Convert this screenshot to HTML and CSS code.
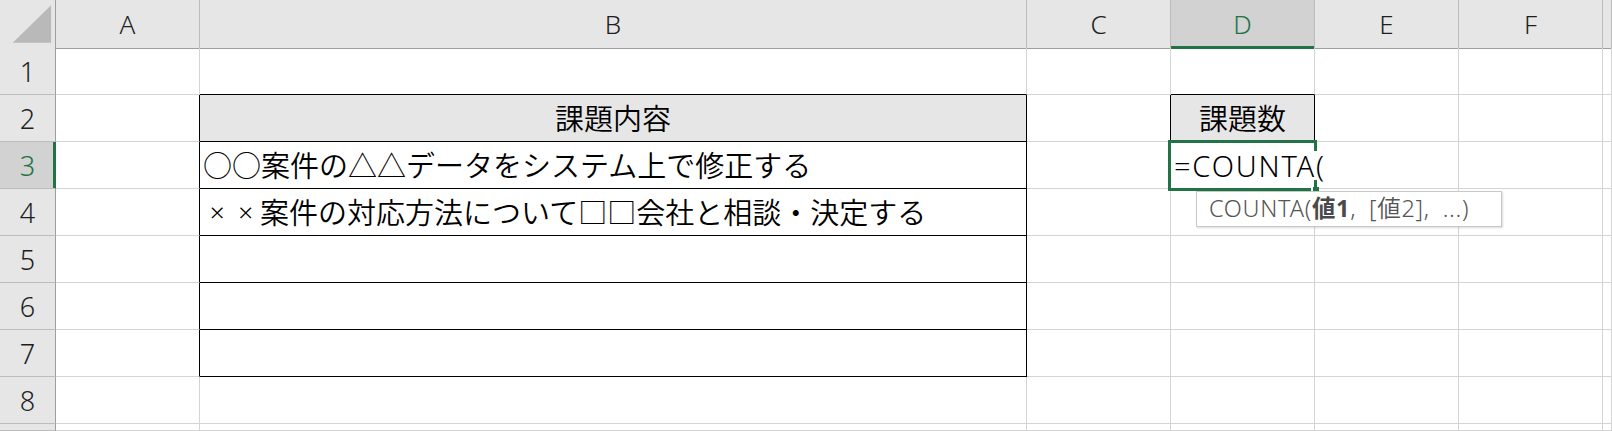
FILE: index.html
```html
<!DOCTYPE html>
<html lang="ja">
<head>
    <meta charset="UTF-8">
    <title>課題一覧</title>
    <link rel="stylesheet" href="styles.css">
</head>
<body>
    <div class="sheet">
        <!-- column headers -->
        <div class="row head">
            <div class="cell corner">
                <svg width="56" height="48" viewBox="0 0 56 48"><polygon points="13,43 52,43 52,5" fill="#b9b9b9"/></svg>
            </div>
            <div class="cell hd">A</div>
            <div class="cell hd">B</div>
            <div class="cell hd">C</div>
            <div class="cell hd active">D</div>
            <div class="cell hd">E</div>
            <div class="cell hd">F</div>
            <div class="cell hd"></div>
        </div>

        <div class="row">
            <div class="cell rh">1</div>
            <div class="cell"></div>
            <div class="cell bb"></div>
            <div class="cell"></div>
            <div class="cell bb"></div>
            <div class="cell"></div>
            <div class="cell"></div>
            <div class="cell"></div>
        </div>

        <div class="row">
            <div class="cell rh">2</div>
            <div class="cell br"></div>
            <div class="cell br bb fill center">課題内容</div>
            <div class="cell br"></div>
            <div class="cell br bb fill center">課題数</div>
            <div class="cell"></div>
            <div class="cell"></div>
            <div class="cell"></div>
        </div>

        <div class="row">
            <div class="cell rh active">3</div>
            <div class="cell br"></div>
            <div class="cell br bb">○○案件の△△データをシステム上で修正する</div>
            <div class="cell"></div>
            <div class="cell"><span class="input">=COUNTA(</span></div>
            <div class="cell"></div>
            <div class="cell"></div>
            <div class="cell"></div>
        </div>

        <div class="row">
            <div class="cell rh">4</div>
            <div class="cell br"></div>
            <div class="cell br bb"><span class="x">×</span><span class="x">×</span>案件の対応方法について□□会社と相談・決定する</div>
            <div class="cell"></div>
            <div class="cell"></div>
            <div class="cell"></div>
            <div class="cell"></div>
            <div class="cell"></div>
        </div>

        <div class="row">
            <div class="cell rh">5</div>
            <div class="cell br"></div>
            <div class="cell br bb"></div>
            <div class="cell"></div>
            <div class="cell"></div>
            <div class="cell"></div>
            <div class="cell"></div>
            <div class="cell"></div>
        </div>

        <div class="row">
            <div class="cell rh">6</div>
            <div class="cell br"></div>
            <div class="cell br bb"></div>
            <div class="cell"></div>
            <div class="cell"></div>
            <div class="cell"></div>
            <div class="cell"></div>
            <div class="cell"></div>
        </div>

        <div class="row">
            <div class="cell rh">7</div>
            <div class="cell br"></div>
            <div class="cell br bb"></div>
            <div class="cell"></div>
            <div class="cell"></div>
            <div class="cell"></div>
            <div class="cell"></div>
            <div class="cell"></div>
        </div>

        <div class="row">
            <div class="cell rh">8</div>
            <div class="cell"></div>
            <div class="cell"></div>
            <div class="cell"></div>
            <div class="cell"></div>
            <div class="cell"></div>
            <div class="cell"></div>
            <div class="cell"></div>
        </div>

        <div class="row rest">
            <div class="cell rh"></div>
            <div class="cell"></div>
            <div class="cell"></div>
            <div class="cell"></div>
            <div class="cell"></div>
            <div class="cell"></div>
            <div class="cell"></div>
            <div class="cell"></div>
        </div>

        <!-- active cell D3 -->
        <div class="selection"><span class="handle"></span></div>

        <!-- function hint -->
        <div class="hint">COUNTA(<b>値1</b>, [値2], ...)</div>
    </div>
</body>
</html>
```

FILE: styles.css
```css
body {
    margin: 0;
    padding: 0;
    background-color: #fff;
    font-family: "Noto Sans", "Noto Sans CJK JP", sans-serif;
    font-weight: 350;
    overflow: hidden;
}

.sheet {
    position: relative;
    width: 1612px;
    height: 431px;
    display: flex;
    flex-direction: column;
}

.row {
    display: grid;
    grid-template-columns: 56px 144px 827px 144px 144px 144px 144px 1fr;
    height: 47px;
    flex: none;
}

.row.head {
    height: 48px;
}

.row.rest {
    flex: 1;
    height: auto;
}

.cell {
    box-sizing: border-box;
    border-right: 1px solid #d4d4d4;
    border-bottom: 1px solid #d4d4d4;
    display: flex;
    align-items: center;
    padding-left: 3px;
    font-size: 29px;
    line-height: 1;
    color: #000;
    white-space: nowrap;
}

.cell.center {
    justify-content: center;
    padding-left: 0;
}

.cell.fill {
    background-color: #e7e6e6;
}

/* table borders */
.cell.br {
    border-right-color: #000;
}

.cell.bb {
    border-bottom-color: #000;
}

.x {
    display: inline-block;
    width: 28.5px;
    text-align: center;
    font-size: 26px;
}

/* headers */
.corner {
    padding: 0;
    background-color: #e6e6e6;
    border-right-color: #9e9e9e;
    border-bottom-color: #9e9e9e;
}

.hd {
    justify-content: center;
    padding-left: 0;
    background-color: #e6e6e6;
    border-right-color: #bcbcbc;
    border-bottom-color: #9e9e9e;
    font-size: 26px;
    color: #1e1e1e;
}

.rh {
    justify-content: center;
    padding-left: 0;
    background-color: #e6e6e6;
    border-right-color: #9e9e9e;
    border-bottom-color: #bcbcbc;
    font-size: 27px;
    color: #1e1e1e;
}

.hd.active {
    background-color: #d2d2d2;
    color: #217346;
    border-bottom-color: #217346;
    box-shadow: inset 0 -2px 0 #217346;
}

.rh.active {
    background-color: #d2d2d2;
    color: #217346;
    border-right-color: #217346;
    box-shadow: inset -2px 0 0 #217346;
}

/* in-cell editor text runs over the selection edge */
.input {
    position: relative;
    z-index: 2;
    padding-right: 2px;
    background-color: #fff;
    letter-spacing: 1.8px;
}

/* active cell outline */
.selection {
    position: absolute;
    left: 1168px;
    top: 140px;
    width: 149px;
    height: 51px;
    box-sizing: border-box;
    border: 3px solid #217346;
}

.handle {
    position: absolute;
    right: -5px;
    bottom: -5px;
    width: 6px;
    height: 6px;
    background-color: #217346;
    border-left: 2px solid #fff;
}

.hint {
    position: absolute;
    z-index: 3;
    left: 1196px;
    top: 191px;
    width: 306px;
    height: 36px;
    box-sizing: border-box;
    padding-left: 12px;
    background-color: #fff;
    border: 1px solid #c8c8c8;
    box-shadow: 1px 1px 2px rgba(0, 0, 0, 0.15);
    font-size: 23.5px;
    line-height: 33px;
    letter-spacing: 0.7px;
    word-spacing: 6px;
    color: #555;
    white-space: nowrap;
}

.hint b {
    font-weight: 700;
    color: #4a4a4a;
}
```
